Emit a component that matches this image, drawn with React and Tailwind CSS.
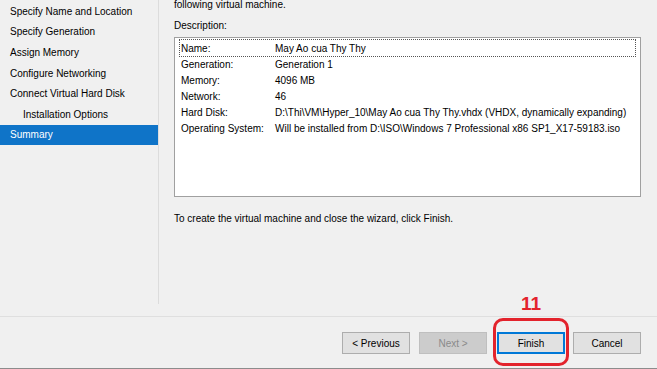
const steps = [
  { label: "Specify Name and Location" },
  { label: "Specify Generation" },
  { label: "Assign Memory" },
  { label: "Configure Networking" },
  { label: "Connect Virtual Hard Disk" },
  { label: "Installation Options", sub: true },
  { label: "Summary", active: true },
];

const details = [
  ["Name:", "May Ao cua Thy Thy"],
  ["Generation:", "Generation 1"],
  ["Memory:", "4096 MB"],
  ["Network:", "46"],
  ["Hard Disk:", "D:\\Thi\\VM\\Hyper_10\\May Ao cua Thy Thy.vhdx (VHDX, dynamically expanding)"],
  ["Operating System:", "Will be installed from D:\\ISO\\Windows 7 Professional x86 SP1_X17-59183.iso"],
];

function Button({ children, disabled, focused }) {
  return (
    <div
      className={`h-[22px] flex items-center justify-center border text-[10px] ${
        disabled
          ? "bg-[#cccccc] border-[#bfbfbf] text-[#8a8a8a]"
          : focused
          ? "bg-[#e1e1e1] border-[#0078d7] border-2 text-black"
          : "bg-[#e1e1e1] border-[#adadad] text-black"
      }`}
    >
      {children}
    </div>
  );
}

export default function App() {
  return (
    <div
      className="w-[657px] h-[369px] bg-[#f0f0f0] overflow-hidden flex flex-col text-black"
      style={{ fontFamily: '"Liberation Sans", Arial, sans-serif' }}
    >
      <div className="h-[316px] flex shrink-0">
        {/* steps */}
        <div className="w-[158px] shrink-0 pt-[1px] text-[10px]">
          {steps.map((s) => (
            <div
              key={s.label}
              className={`h-[20.6px] flex items-center ${s.sub ? "pl-[23px]" : "pl-[10px]"} ${
                s.active ? "bg-[#0f74c8] text-white" : ""
              }`}
            >
              {s.label}
            </div>
          ))}
        </div>
        <div className="w-px h-[304px] bg-[#dcdcdc] shrink-0" />

        {/* content */}
        <div className="flex-1 pl-[15px] pr-[15px] text-[10px] overflow-hidden">
          <div className="mt-[-2px] leading-[14px]">following virtual machine.</div>
          <div className="mt-[7px] leading-[14px]">Description:</div>
          <div className="mt-[4px] w-[467px] h-[160px] bg-white border border-[#a0a0a0] pt-[2px] px-[6px]">
            {details.map(([k, v], i) => (
              <div
                key={k}
                className={`flex h-[16px] items-center whitespace-nowrap ${
                  i === 0 ? "outline outline-1 outline-dotted outline-[#555] -mx-[1px] px-[1px]" : ""
                }`}
              >
                <span className="w-[94px] shrink-0">{k}</span>
                <span>{v}</span>
              </div>
            ))}
          </div>
          <div className="mt-[15px] leading-[14px]">
            To create the virtual machine and close the wizard, click Finish.
          </div>
        </div>
      </div>

      {/* footer */}
      <div className="flex-1 border-t border-[#dfdfdf] border-b border-b-[#8c8c8c]">
        <div className="flex justify-end pr-[16px] pt-[15px]">
          <div className="w-[68px]"><Button>&lt; Previous</Button></div>
          <div className="w-[68px] ml-[9px]"><Button disabled>Next &gt;</Button></div>
          <div className="w-[68px] ml-[10px] relative">
            <Button focused>Finish</Button>
            <div className="absolute -left-[4px] -right-[4px] -top-[14px] h-[48px] border-[3px] border-[#e3232c] rounded-[10px]" />
            <div className="absolute left-0 right-0 -top-[38px] text-center text-[#e3232c] font-bold text-[19px] leading-[20px]">
              11
            </div>
          </div>
          <div className="w-[68px] ml-[8px]"><Button>Cancel</Button></div>
        </div>
      </div>
    </div>
  );
}
